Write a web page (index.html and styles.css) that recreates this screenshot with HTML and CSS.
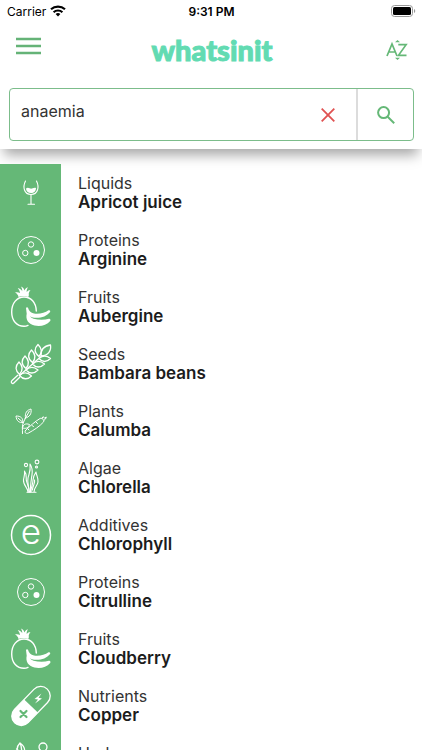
FILE: index.html
```html
<!DOCTYPE html>
<html lang="en">
<head>
<meta charset="utf-8">
<meta name="viewport" content="width=device-width, initial-scale=1">
<title>whatsinit</title>
<link rel="stylesheet" href="styles.css">
</head>
<body>
<svg class="sprite" aria-hidden="true">
  <symbol id="wine" viewBox="0 0 61 57">
    <g fill="none" stroke="#fff" stroke-width="1.100" stroke-linecap="round">
      <path d="M25.500 17C22.500 23 24 30.500 31 30.500S39.500 23 36.500 17"/>
      <path d="M31 30.500V40M28 40.300h6.500"/>
    </g>
    <path fill="#fff" d="M26 24.500c2.500-2 4 .8 6 0s3-1 4-.5c0 3-2 5-5 5s-5-2-5-4.500z"/>
  </symbol>
  <symbol id="protein" viewBox="0 0 61 57">
    <g fill="none" stroke="#fff" stroke-width="1">
      <circle cx="31" cy="29" r="13.500"/>
      <circle cx="31" cy="23.500" r="2.700"/>
      <circle cx="25.300" cy="32" r="2.700"/>
    </g>
    <circle cx="36.500" cy="32" r="3" fill="#fff"/>
  </symbol>
  <symbol id="fruit" viewBox="0 0 61 57">
    <path fill="#fff" d="M18.500 19c-.3-2-1.500-3.500-3.500-4.500 2-.4 3.700-.2 5 .6-.3-2-1-3.500-2.300-5 2.200.5 3.700 1.600 4.500 3.200.1-1.800-.3-3.300-1.200-4.800 2 .8 3 2.200 3.400 4 .6-1.600 1.800-2.700 3.500-3.300-.9 1.600-1.300 3.100-1.200 4.800 1-1.200 2.200-1.800 3.800-2-1.100 1.500-1.700 2.700-1.800 4 .4 1.200 0 2-.5 3-3-1.300-6.700-1.300-9.700 0z"/>
    <path fill="none" stroke="#fff" stroke-width="1.400" stroke-linecap="round" d="M36.300 33C36 24.500 31 19 24 19S11.700 25 11.700 34 17 48.300 24 48.300c1.500 0 2.700-.3 4-.9"/>
    <path fill="#fff" d="M26 30c.3-1 1.600-1.100 2-.2.700 3 2.700 5.200 6 5.800 5.500.8 11-.8 14.500-3.300 1.500-.5 2 .7 1.600 1.700-3.500 4.500-10 6.500-16 5.700-1.500-.2-3-.7-4.300-1.400 1 1.200 2.300 2 3.800 2.400 5 1.400 10.500 1.500 15.400.1 1.400-.2 1.800 1.100 1.200 2.100-3.700 4.600-10 5.800-15.700 4.600-6.500-1.500-9-6-7.800-11.700z"/>
  </symbol>
  <symbol id="seeds" viewBox="0 0 61 57">
    <g fill="none" stroke="#fff" stroke-width="1.300" stroke-linejoin="round">
      <path d="M11.500 46L18 40M13.300 48.500L20 42M11.500 46c-.7 1.500.5 2.800 1.800 2.500M19 41L41 21.500"/>
      <path d="M19.500 39.500c-4.500-4-4.500-8.500-.5-12.500 4 4 4 8.500.5 12.500z"/>
      <path d="M26 33.500c-5-4-5-8.500-1-12.500 4 4 4.500 8.500 1 12.500z"/>
      <path d="M32.500 27.500c-5-4-5-8.500-1-12.500 4 4 4.500 8.500 1 12.500z"/>
      <path d="M39 21.500c-5-4-5-8-1-12 4 4 4.500 8 1 12z"/>
      <path d="M19.500 40.500c4-3.500 8.500-3 12 .5-4 4-8.500 3.500-12-.5z"/>
      <path d="M26 35c4-3.500 8.500-3 12 0-4 4-8.500 4-12 0z"/>
      <path d="M32.500 29c4-3.500 8.500-3 12 0-4 4-8.500 4-12 0z"/>
      <path d="M39 23.500c4-3.500 8-3 11.500 0-4 4-8 4-11.500 0z"/>
      <path d="M41 21c-.5-6 3-10 9.500-11 1 6-2.500 10.500-9.500 11z"/>
    </g>
  </symbol>
  <symbol id="plants" viewBox="0 0 61 57">
    <g fill="none" stroke="#fff" stroke-width="1" stroke-linecap="round" stroke-linejoin="round">
      <path d="M22.500 41.500c0-5-.5-8 .8-11 1-1.500 1.700-3 2-4.500"/>
      <path d="M23 30.500c-4 .5-6.500-1.500-7-6.500 5 0 7 2 7 6.500zM18 26l5 4.500"/>
      <path d="M25.500 26c-1-5 1.500-8 5.500-9 .8 5-1.500 8-5.500 9zM29.500 19l-4 7"/>
      <path d="M22.500 36c.5-3.500 3-5 7-3.500-1 3.500-3.500 4.500-7 3.500z"/>
      <path d="M25.500 38.500C30 34 35 29.500 40 26.500c2-1 4.500 1.500 3.500 3.500-4 4.500-9.500 8-15 11-2.500 1.300-4.500-.5-3-2.500zM42 26.500l1-1.800 1.500 1.300 1.800-1-.8 2-1.500 1.300M32 33.500l1.500 1M36 30l1.500 1.500M29 38l-1-1"/>
    </g>
  </symbol>
  <symbol id="algae" viewBox="0 0 61 57">
    <g fill="none" stroke="#fff" stroke-width="1.100" stroke-linecap="round" stroke-linejoin="round">
      <circle cx="26" cy="16" r="1.600"/><circle cx="37" cy="13" r="1.900"/><circle cx="36.500" cy="18" r="1"/>
      <path d="M28 43c0-4-5-7-4.500-12 .3-3 1.500-5 1-9 3 4 1 7 2 10 .7 3 2.500 6 3 11"/>
      <path d="M29 43c0-6-2-9-1-14 .8-4 3-6 2-14 4 6 2 10 1.500 14-.5 5-1.500 8-1 14"/>
      <path d="M31 43c0-6 2-7 2-12 0-3 1-5 3-8 .5 4 2.500 6 2 10-.5 4-4 5-4 10M27 43.300h9M34.500 31c1 3-2 6-2 10"/>
    </g>
  </symbol>
  <symbol id="nutrient" viewBox="0 0 61 57">
    <g transform="rotate(-46 31 29)">
      <rect x="7.500" y="19.500" width="47" height="19" rx="9.500" fill="none" stroke="#fff" stroke-width="1.300"/>
      <path fill="#fff" d="M31 19.500H17a9.500 9.500 0 0 0 0 19H31z"/>
    </g>
    <path stroke="#65b877" stroke-width="2.200" stroke-linecap="round" d="M20.500 34l6 6M26.500 34l-6 6"/>
    <path fill="#fff" d="M41.500 16.500l-7 5.500 3.500.5-3 4 7-5-3.500-.8z"/>
  </symbol>
  <symbol id="herbs" viewBox="0 0 61 57">
    <g fill="none" stroke="#fff" stroke-width="1.300" stroke-linecap="round" stroke-linejoin="round">
      <path d="M20 9c-4 4-3.500 9 1 14 5-4 5-10-1-14zM20 9c2 4 2 9 1 14M21 22c-1-4-2.500-6-4.500-7"/>
      <circle cx="43" cy="13" r="4"/><path d="M40 16l-8 9"/>
    </g>
  </symbol>
</svg>

<div class="app">
  <header class="top">
    <div class="status">
      <div class="carrier">
        <span>Carrier</span>
        <svg width="16" height="12" viewBox="0 0 16 12" aria-hidden="true">
          <g fill="none" stroke="#000" stroke-width="2.200"><path d="M1 4.300a10.300 10.300 0 0 1 14 0"/><path d="M3.600 7.200a6.500 6.500 0 0 1 8.800 0"/></g>
          <path d="M5.600 9a3.600 3.600 0 0 1 4.800 0L8 11.500z"/>
        </svg>
      </div>
      <time class="clock">9:31 PM</time>
      <svg class="battery" width="25" height="12" viewBox="0 0 25 12" aria-hidden="true">
        <rect x=".5" y=".5" width="21" height="11" rx="3" fill="#fff" stroke="#999"/>
        <rect x="2" y="2" width="18" height="8" rx="1.500"/>
        <path fill="#999" d="M23 4c1.700.6 1.700 3.400 0 4z"/>
      </svg>
    </div>
    <div class="bar">
      <button class="icon-button" type="button" aria-label="Menu">
        <svg width="25" height="18" viewBox="0 0 25 18"><path stroke="#65b377" stroke-width="2.600" d="M0 2h25M0 9h25M0 16h25"/></svg>
      </button>
      <h1 class="logo">whatsinit</h1>
      <button class="icon-button sort" type="button" aria-label="Sort alphabetically">
        <svg width="22" height="20" viewBox="0 0 22 20">
          <g fill="none" stroke="#65b877" stroke-width="1.700"><path d="M1 16L6 4l5 12M2.800 12h6.400"/><path d="M12.300 4.700h7.800L12.500 15.300h8"/></g>
          <path fill="#65b877" d="M9 2.300h5L11.500 0zM9 17.700h5L11.500 20z"/>
        </svg>
      </button>
    </div>
    <form class="search">
      <input class="query" type="text" value="anaemia" aria-label="Search">
      <button class="clear" type="button" aria-label="Clear">
        <svg width="14" height="14" viewBox="0 0 14 14"><path stroke="#e05252" stroke-width="1.800" d="M.7.700l12.600 12.600M13.300.7L.7 13.300"/></svg>
      </button>
      <button class="go" type="button" aria-label="Find">
        <svg width="18" height="18" viewBox="0 0 18 18" fill="none" stroke="#65b877" stroke-width="2"><circle cx="6.600" cy="6.600" r="5.500"/><path d="M10.700 10.700l6.500 6.500"/></svg>
      </button>
    </form>
  </header>
  <main class="content">
    <ul class="list">
      <li class="item"><svg class="icon"><use href="#wine"/></svg><div class="text"><span>Liquids</span><b>Apricot juice</b></div></li>
      <li class="item"><svg class="icon"><use href="#protein"/></svg><div class="text"><span>Proteins</span><b>Arginine</b></div></li>
      <li class="item"><svg class="icon"><use href="#fruit"/></svg><div class="text"><span>Fruits</span><b>Aubergine</b></div></li>
      <li class="item"><svg class="icon"><use href="#seeds"/></svg><div class="text"><span>Seeds</span><b>Bambara beans</b></div></li>
      <li class="item"><svg class="icon"><use href="#plants"/></svg><div class="text"><span>Plants</span><b>Calumba</b></div></li>
      <li class="item"><svg class="icon"><use href="#algae"/></svg><div class="text"><span>Algae</span><b>Chlorella</b></div></li>
      <li class="item">
        <svg class="icon" viewBox="0 0 61 57">
          <circle cx="31" cy="29" r="19.500" fill="none" stroke="#fff" stroke-width="1.500"/>
          <text class="e-mark" x="31" y="38" text-anchor="middle">e</text>
        </svg>
        <div class="text"><span>Additives</span><b>Chlorophyll</b></div>
      </li>
      <li class="item"><svg class="icon"><use href="#protein"/></svg><div class="text"><span>Proteins</span><b>Citrulline</b></div></li>
      <li class="item"><svg class="icon"><use href="#fruit"/></svg><div class="text"><span>Fruits</span><b>Cloudberry</b></div></li>
      <li class="item"><svg class="icon"><use href="#nutrient"/></svg><div class="text"><span>Nutrients</span><b>Copper</b></div></li>
      <li class="item"><svg class="icon"><use href="#herbs"/></svg><div class="text"><span>Herbs</span></div></li>
    </ul>
  </main>
</div>
</body>
</html>
```
FILE: styles.css
```css
* { box-sizing: border-box; }

body {
  margin: 0;
  background: #fff;
  color: #1c1c1c;
  font-family: Inter, "Liberation Sans", sans-serif;
}

button {
  padding: 0;
  border: 0;
  background: none;
}

svg { display: block; }

.sprite {
  position: absolute;
  width: 0;
  height: 0;
}

.app {
  display: flex;
  flex-direction: column;
  height: 100vh;
  overflow: hidden;
}

.top {
  flex: none;
  padding-bottom: 8px;
  background: #fff;
  box-shadow: 0 10px 12px -4px rgba(0, 0, 0, 0.35);
}

.status {
  display: grid;
  grid-template-columns: 1fr auto 1fr;
  align-items: center;
  height: 22px;
  padding: 0 6px 0 7px;
  color: #000;
  font-size: 12px;
}

.carrier {
  display: flex;
  align-items: center;
  gap: 4px;
}

.clock { font-weight: 600; }

.battery { justify-self: end; }

.bar {
  display: grid;
  grid-template-columns: 1fr auto 1fr;
  align-items: center;
  height: 56px;
  padding: 0 14px 0 16px;
}

.icon-button {
  justify-self: start;
  padding-bottom: 8px;
}

.sort {
  justify-self: end;
  padding-bottom: 0;
}

.logo {
  margin: 0;
  color: #62dbb2;
  font-family: Lato, sans-serif;
  font-size: 29px;
  font-weight: 900;
  line-height: 32px;
  -webkit-text-stroke: 1px #62dbb2;
}

.search {
  display: flex;
  height: 53px;
  margin: 10px 8px 0 9px;
  border: 1px solid #7cbd8b;
  border-radius: 4px;
}

.query {
  flex: 1;
  min-width: 0;
  padding: 0 11px 8px;
  border: 0;
  outline: 0;
  background: none;
  color: #333;
  font: 16px Inter, sans-serif;
}

.clear {
  display: grid;
  place-items: center;
  width: 56px;
}

.go {
  display: grid;
  place-items: center;
  width: 57px;
  border-left: 2px solid #dcdcdc;
}

.content {
  flex: 1;
  min-height: 0;
  padding-top: 15px;
}

.list {
  margin: 0;
  padding: 0;
  list-style: none;
}

.item {
  display: flex;
  height: 57px;
}

.icon {
  flex: none;
  width: 61px;
  height: 57px;
  background: #65b877;
}

.e-mark {
  fill: #fff;
  font-family: Inter, sans-serif;
  font-size: 35px;
  font-weight: 300;
}

.text {
  display: flex;
  flex-direction: column;
  padding: 10px 17px 0;
  font-size: 16px;
  line-height: 19px;
}

.text span { color: #333; }

.text b {
  font-size: 17px;
  font-weight: 600;
}
```
